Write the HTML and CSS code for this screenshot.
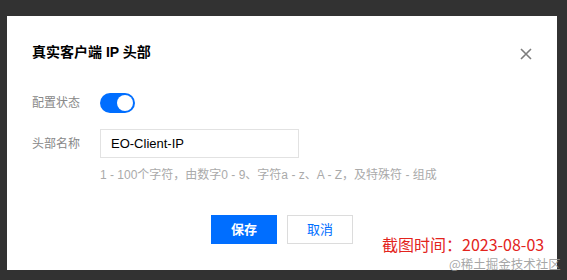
FILE: index.html
```html
<!DOCTYPE html>
<html lang="zh-CN">
<head>
<meta charset="utf-8">
<link rel="stylesheet" href="styles.css">
</head>
<body>
<div class="dialog">
  <div class="header">
    <div class="title">真实客户端 IP 头部</div>
    <svg class="close" width="12" height="12" viewBox="0 0 12 12"><path d="M1 1L11 11M11 1L1 11" stroke="#7d7d7d" stroke-width="1.6" fill="none"/></svg>
  </div>
  <div class="form">
    <div class="row row-switch">
      <div class="label">配置状态</div>
      <div class="switch"><span class="knob"></span></div>
    </div>
    <div class="row row-input">
      <div class="label">头部名称</div>
      <div class="input">EO-Client-IP</div>
    </div>
    <div class="hint">1 - 100个字符，由数字0 - 9、字符a - z、A - Z，及特殊符 - 组成</div>
  </div>
  <div class="footer">
    <div class="btn btn-primary">保存</div>
    <div class="btn btn-default">取消</div>
  </div>
  <div class="stamp">截图时间：2023-08-03</div>
</div>
<div class="watermark">@稀土掘金技术社区</div>
</body>
</html>
```
FILE: styles.css
```css
html, body {
  margin: 0;
  padding: 0;
}
body {
  background: #323232;
  width: 567px;
  height: 280px;
  overflow: hidden;
  position: relative;
  font-family: "Liberation Sans", "Noto Sans CJK SC", sans-serif;
}
.dialog {
  position: relative;
  margin: 16px 0 0 7px;
  width: 550px;
  height: 254px;
  background: #fff;
  box-sizing: border-box;
  padding: 26px 25px 0 25px;
  display: flex;
  flex-direction: column;
}
.header {
  display: flex;
  align-items: center;
  justify-content: space-between;
  height: 20px;
}
.title {
  font-size: 14px;
  font-weight: bold;
  color: #000;
  line-height: 20px;
}
.close {
  margin-right: 0px;
  margin-top: 4px;
}
.form {
  margin-top: 31px;
  display: flex;
  flex-direction: column;
}
.row {
  display: flex;
  align-items: center;
}
.label {
  width: 68px;
  font-size: 12px;
  color: #888;
  line-height: 20px;
}
.switch {
  width: 35px;
  height: 20px;
  border-radius: 10px;
  background: #006eff;
  position: relative;
}
.knob {
  position: absolute;
  right: 2px;
  top: 2px;
  width: 16px;
  height: 16px;
  border-radius: 50%;
  background: #fff;
}
.row-input {
  margin-top: 16px;
}
.input {
  width: 199px;
  height: 29px;
  box-sizing: border-box;
  border: 1px solid #e2e2e2;
  padding-left: 10px;
  font-size: 13px;
  line-height: 27px;
  color: #000;
}
.hint {
  margin-top: 8px;
  margin-left: 68px;
  font-size: 12px;
  line-height: 18px;
  color: #aaa;
}
.footer {
  margin-top: 31px;
  display: flex;
  justify-content: center;
  gap: 10px;
}
.btn {
  width: 66px;
  height: 29px;
  box-sizing: border-box;
  font-size: 13px;
  line-height: 27px;
  text-align: center;
  font-weight: bold;
}
.btn-primary {
  background: #006eff;
  border: 1px solid #006eff;
  color: #fff;
}
.btn-default {
  background: #fff;
  border: 1px solid #dcdcdc;
  color: #006eff;
  font-weight: normal;
}
.stamp {
  position: absolute;
  left: 375px;
  top: 220px;
  font-size: 16px;
  line-height: 17px;
  color: #e3241d;
  font-family: "Noto Sans CJK SC", sans-serif;
}
.watermark {
  position: absolute;
  left: 449px;
  top: 257px;
  font-size: 12.5px;
  line-height: 14px;
  color: rgba(150, 150, 150, 0.85);
  font-family: "Noto Sans CJK SC", sans-serif;
}
```
